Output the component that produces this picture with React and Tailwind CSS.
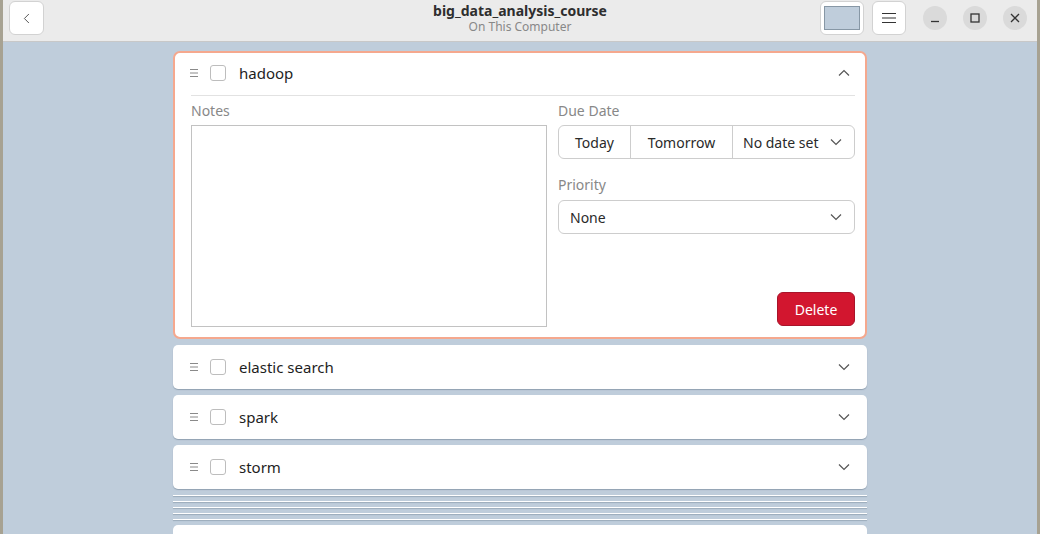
import { ChevronLeft } from "lucide-react";

const font = { fontFamily: '"Noto Sans", "DejaVu Sans", sans-serif' };

function Chevron({ up = false }) {
  return (
    <svg width="12" height="8" viewBox="0 0 12 8" className="text-[#555]">
      <path
        d={up ? "M1 6.5 L6 1.5 L11 6.5" : "M1 1.5 L6 6.5 L11 1.5"}
        fill="none"
        stroke="currentColor"
        strokeWidth="1.2"
      />
    </svg>
  );
}

function DragHandle() {
  return (
    <svg width="8" height="8" viewBox="0 0 8 8" className="text-[#8a8a8a]">
      <path d="M0 0.5 H8 M0 4 H8 M0 7.5 H8" stroke="currentColor" strokeWidth="1" />
    </svg>
  );
}

function Checkbox() {
  return <div className="h-[16px] w-[16px] rounded-[3px] border border-[#bdbdbd] bg-white" />;
}

function CollapsedCard({ title }) {
  return (
    <div className="flex h-[44px] shrink-0 items-center rounded-[5px] bg-white pl-[17px] pr-[17px] shadow-[0_1px_1px_rgba(60,80,100,0.35)]">
      <DragHandle />
      <div className="ml-[12px]">
        <Checkbox />
      </div>
      <span className="ml-[13px] flex-1 text-[15px] text-[#1e1e1e]">{title}</span>
      <Chevron />
    </div>
  );
}

export default function App() {
  return (
    <div className="flex h-[534px] w-[1040px] overflow-hidden bg-[#a7a292]" style={font}>
      <div className="w-[3px]" />
      <div className="flex flex-1 flex-col">
        {/* header bar */}
        <header className="relative flex h-[42px] shrink-0 items-start border-b border-[#c8c8c8] bg-[#ebebeb] pt-[1px]">
          <button className="ml-[6px] flex h-[34px] w-[35px] items-center justify-center rounded-[6px] border border-[#d2d2d2] bg-white text-[#3a3a3a]">
            <ChevronLeft size={17} strokeWidth={1.2} />
          </button>
          <div className="absolute left-0 right-0 top-[4px] flex flex-col items-center leading-none">
            <span className="text-[14px] font-bold text-[#2e2e2e]">big_data_analysis_course</span>
            <span className="mt-[3px] text-[12px] text-[#888]">On This Computer</span>
          </div>
          <div className="ml-auto flex items-start">
            <button className="flex h-[34px] w-[44px] items-center justify-center rounded-[6px] border border-[#d2d2d2] bg-white">
              <div className="h-[24px] w-[36px] border border-[#8797a5] bg-[#bfcddb]" />
            </button>
            <button className="ml-[8px] flex h-[34px] w-[34px] items-center justify-center rounded-[6px] border border-[#d2d2d2] bg-white">
              <svg width="16" height="12" viewBox="0 0 16 12" className="text-[#333]">
                <path d="M1 1.5 H15 M1 6 H15 M1 10.5 H15" stroke="currentColor" strokeWidth="1.1" />
              </svg>
            </button>
            <div className="ml-[17px] mr-[10px] mt-[5px] flex gap-[16px]">
              <div className="flex h-[24px] w-[24px] items-center justify-center rounded-full bg-[#dadada]">
                <svg width="10" height="10" viewBox="0 0 10 10">
                  <path d="M1 8.5 H9" stroke="#333" strokeWidth="1.3" />
                </svg>
              </div>
              <div className="flex h-[24px] w-[24px] items-center justify-center rounded-full bg-[#dadada]">
                <svg width="10" height="10" viewBox="0 0 10 10">
                  <rect x="1" y="1" width="8" height="8" fill="none" stroke="#333" strokeWidth="1.3" />
                </svg>
              </div>
              <div className="flex h-[24px] w-[24px] items-center justify-center rounded-full bg-[#dadada]">
                <svg width="10" height="10" viewBox="0 0 10 10">
                  <path d="M1 1 L9 9 M9 1 L1 9" stroke="#333" strokeWidth="1.3" />
                </svg>
              </div>
            </div>
          </div>
        </header>

        {/* task list */}
        <main className="flex flex-1 justify-center overflow-hidden bg-[#bfcddb] pt-[9px]">
          <div className="flex w-[694px] flex-col">
            <div className="h-[288px] shrink-0 rounded-[7px] border-2 border-[#f5a88e] bg-white">
              <div className="pl-[14px] pr-[10px]">
                <div className="flex h-[42px] items-center pb-[2px] pl-[1px] pr-[5px]">
                  <DragHandle />
                  <div className="ml-[12px]">
                    <Checkbox />
                  </div>
                  <span className="ml-[13px] flex-1 text-[15px] text-[#1e1e1e]">hadoop</span>
                  <Chevron up />
                </div>
                <div className="ml-[2px] h-px bg-[#e2e2e2]" />
                <div className="ml-[2px] mt-[6px] flex gap-[11px]">
                  <div className="flex w-[356px] flex-col">
                    <span className="text-[14px] leading-[18px] text-[#888]">Notes</span>
                    <div className="mt-[5px] h-[202px] border border-[#c2c2c2]" />
                  </div>
                  <div className="flex flex-1 flex-col">
                    <span className="text-[14px] leading-[18px] text-[#888]">Due Date</span>
                    <div className="mt-[5px] flex h-[34px] rounded-[6px] border border-[#cdcdcd] text-[14px] text-[#2a2a2a]">
                      <div className="flex w-[72px] items-center justify-center border-r border-[#cdcdcd]">Today</div>
                      <div className="flex w-[102px] items-center justify-center border-r border-[#cdcdcd]">Tomorrow</div>
                      <div className="flex flex-1 items-center justify-between pl-[10px] pr-[12px]">
                        <span>No date set</span>
                        <Chevron />
                      </div>
                    </div>
                    <span className="mt-[17px] text-[14px] leading-[18px] text-[#888]">Priority</span>
                    <div className="mt-[6px] flex h-[34px] items-center justify-between rounded-[6px] border border-[#cdcdcd] pl-[11px] pr-[12px] text-[14px] text-[#2a2a2a]">
                      <span>None</span>
                      <Chevron />
                    </div>
                    <div className="mt-[58px] flex justify-end">
                      <button className="h-[34px] w-[78px] rounded-[6px] border border-[#a8142a] bg-[#d2162f] text-[14px] text-white">
                        Delete
                      </button>
                    </div>
                  </div>
                </div>
              </div>
            </div>
            <div className="mt-[6px] flex shrink-0 flex-col gap-[6px]">
              <CollapsedCard title="elastic search" />
              <CollapsedCard title="spark" />
              <CollapsedCard title="storm" />
            </div>
            <div className="mt-[6px] flex shrink-0 flex-col gap-[5px]">
              <div className="h-px bg-white shadow-[0_1px_1px_rgba(60,80,100,0.3)]" />
              <div className="h-px bg-white shadow-[0_1px_1px_rgba(60,80,100,0.3)]" />
              <div className="h-px bg-white shadow-[0_1px_1px_rgba(60,80,100,0.3)]" />
              <div className="h-px bg-white shadow-[0_1px_1px_rgba(60,80,100,0.3)]" />
              <div className="h-px bg-white shadow-[0_1px_1px_rgba(60,80,100,0.3)]" />
            </div>
            <div className="mt-[5px] h-[44px] shrink-0 rounded-[5px] bg-white" />
          </div>
        </main>
      </div>
      <div className="w-[3px]" />
    </div>
  );
}
